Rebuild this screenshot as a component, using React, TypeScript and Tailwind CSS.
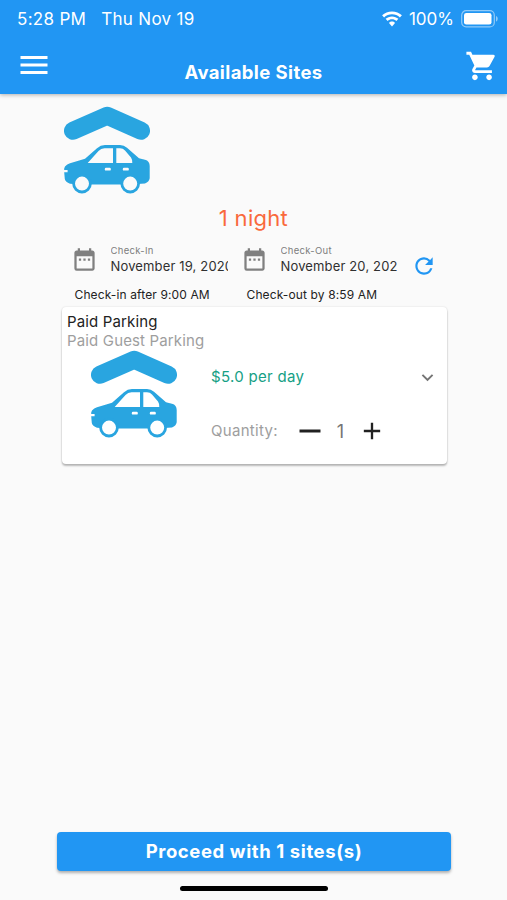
import { MdAdd, MdDateRange, MdExpandMore, MdMenu, MdRefresh, MdRemove, MdShoppingCart } from "react-icons/md"

const ParkingLogo = ({ gap = "#fafafa" }: { gap?: string }) => {
  return (
    <svg className="block w-[86px] h-[88px] shrink-0" viewBox="0 0 86 88" fill="none">
      <path d="M9 24.8 43.2 9.8 77 24.8" stroke="#29a5e0" strokeWidth="18" strokeLinecap="round" strokeLinejoin="round" />
      <path
        fill="#29a5e0"
        d="M6 57.3 21 52.8 33 42.2Q36.5 39 41 39H56Q60 39 63 41.7L75 52.3 81 53.8Q85.7 55 85.7 60V72.3Q85 76 81 77.5L66 78.5H18L6 77.7Q1.5 76 .8 73L.2 66.2H3.6V64H.2V62.5L1 60.5Q3 58.3 6 57.3Z"
      />
      <path fill={gap} d="M23.7 56.9 34.5 45Q37 42.3 40.5 42.3H49V56.9ZM52.3 42.3H56Q59 42.3 61 44.4L67 51.5Q68.6 54 68.3 56.9H52.3Z" />
      <rect x="40.8" y="61.8" width="6" height="2.8" rx="1.2" fill={gap} />
      <rect x="58.8" y="61.8" width="6" height="2.8" rx="1.2" fill={gap} />
      <circle cx="18" cy="77.6" r="8.4" fill={gap} stroke="#29a5e0" strokeWidth="2.8" />
      <circle cx="66.2" cy="77.6" r="8.4" fill={gap} stroke="#29a5e0" strokeWidth="2.8" />
    </svg>
  )
}

const StatusBar = () => {
  return (
    <div className="flex h-[38px] items-center pl-[17px] pr-[9px] text-[17px] leading-5">
      <p className="tracking-[0.3px]">5:28 PM</p>
      <p className="ml-[15px] tracking-[0.3px]">Thu Nov 19</p>
      <svg className="ml-auto w-[22px] h-4" viewBox="0 0 22 16" fill="#fff">
        <path d="M11 3.2c3 0 5.8 1.2 7.9 3.2l2-2.1C18.3 1.8 14.8.4 11 .4S3.7 1.8 1.1 4.3l2 2.1C5.2 4.4 8 3.2 11 3.2Z" />
        <path d="M11 8.2c1.7 0 3.2.6 4.4 1.7l2-2.1C15.700 6.300 13.500 5.400 11 5.400S6.300 6.300 4.600 7.800l2 2.100C7.800 8.800 9.300 8.200 11 8.200Z" />
        <path d="m11 15.600 3-3.600c-.8-.9-1.800-1.400-3-1.400s-2.200.5-3 1.400Z" />
      </svg>
      <p className="ml-[6px]">100%</p>
      <svg className="ml-[7px] w-[37px] h-[18px]" viewBox="0 0 37 18" fill="none">
        <rect x=".7" y=".7" width="32.6" height="16.2" rx="4.5" stroke="#fff" strokeOpacity=".5" strokeWidth="1.2" />
        <rect x="3" y="3" width="27.5" height="11.6" rx="2.3" fill="#fff" />
        <path d="M35 6v5.6c1.1-.4 1.7-1.5 1.7-2.8S36.1 6.4 35 6Z" fill="#fff" fillOpacity=".5" />
      </svg>
    </div>
  )
}

const DateField = ({ label, value }: { label: string; value: string }) => {
  return (
    <div className="flex w-[170px]">
      <MdDateRange className="mt-[2px] size-[27px] shrink-0 text-[#808080]" />
      <div className="ml-[13px] w-[117px] overflow-hidden whitespace-nowrap">
        <p className="mt-px text-[9.5px] leading-3 tracking-[0.3px] text-[#7d7d7d]">{label}</p>
        <p className="text-[13px] leading-[18px] tracking-[0.15px] text-[#303030]">{value}</p>
      </div>
    </div>
  )
}

const SiteCard = () => {
  return (
    <div className="mt-[4px] ml-[62px] h-[157px] w-[385px] rounded-[4px] bg-white px-[5px] pt-[4.5px] shadow-[0_2px_2px_rgba(0,0,0,0.26),0_0_2px_rgba(0,0,0,0.14)]">
      <p className="text-[15px] leading-[19px] tracking-[0.15px] text-[#222]">Paid Parking</p>
      <p className="text-[15px] leading-[19px] tracking-[0.15px] text-[#9e9e9e]">Paid Guest Parking</p>
      <div className="mt-[0.5px] flex pl-[23.5px]">
        <ParkingLogo gap="#fff" />
        <div className="ml-[34.5px] flex-1">
          <div className="mt-[17px] flex h-5 items-center justify-between pr-[3px]">
            <p className="text-[15px] tracking-[0.3px] text-[#16a085]">$5.0 per day</p>
            <MdExpandMore className="size-[23px] text-[#757575]" />
          </div>
          <div className="mt-[32px] flex h-6 items-center">
            <p className="w-[81px] text-[15px] tracking-[0.3px] text-[#9e9e9e]">Quantity:</p>
            <MdRemove className="size-9 text-[#212121]" />
            <p className="w-[25px] text-center text-[18px] text-[#757575]">1</p>
            <MdAdd className="ml-[5px] size-[28px] text-[#212121]" />
          </div>
        </div>
      </div>
    </div>
  )
}

const App = () => {
  return (
    <div className="flex h-[900px] w-[507px] flex-col overflow-hidden bg-[#fafafa] font-['Inter','Liberation_Sans',sans-serif]">
      <header className="h-[94px] shrink-0 bg-[#2196f3] text-white shadow-[0_1px_4px_rgba(0,0,0,0.3)]">
        <StatusBar />
        <div className="flex items-start pr-[8px] pl-[16px]">
          <MdMenu className="mt-[9px] size-9" />
          <h1 className="mt-[23px] flex-1 pr-[10px] text-center text-[18.5px] leading-[22px] font-bold tracking-[0.4px]">Available Sites</h1>
          <MdShoppingCart className="mt-[11px] size-[34px]" />
        </div>
      </header>
      <main className="flex flex-1 flex-col">
        <div className="mt-3 ml-16">
          <ParkingLogo />
        </div>
        <p className="mt-[10px] text-center text-[22px] leading-7 tracking-[0.3px] text-[#f9693c]">1 night</p>
        <div className="mt-[12px] flex pl-[70.5px]">
          <DateField label="Check-In" value="November 19, 2020" />
          <DateField label="Check-Out" value="November 20, 202" />
          <MdRefresh className="mt-[9px] size-[26px] text-[#2196f3]" />
        </div>
        <div className="mt-[8px] flex pl-[74.5px] text-[12px] leading-4 tracking-[0.12px] text-[#222]">
          <p className="w-[172px]">Check-in after 9:00 AM</p>
          <p>Check-out by 8:59 AM</p>
        </div>
        <SiteCard />
        <button className="mt-auto ml-[57px] h-[39px] w-[394px] rounded-[4px] bg-[#2196f3] text-[18.5px] font-bold tracking-[0.6px] text-white shadow-[0_2px_3px_rgba(0,0,0,0.3)]">
          Proceed with 1 sites(s)
        </button>
        <div className="mt-[15px] mb-[9px] ml-[180px] h-[5px] w-[148px] rounded-full bg-black" />
      </main>
    </div>
  )
}

export default App
